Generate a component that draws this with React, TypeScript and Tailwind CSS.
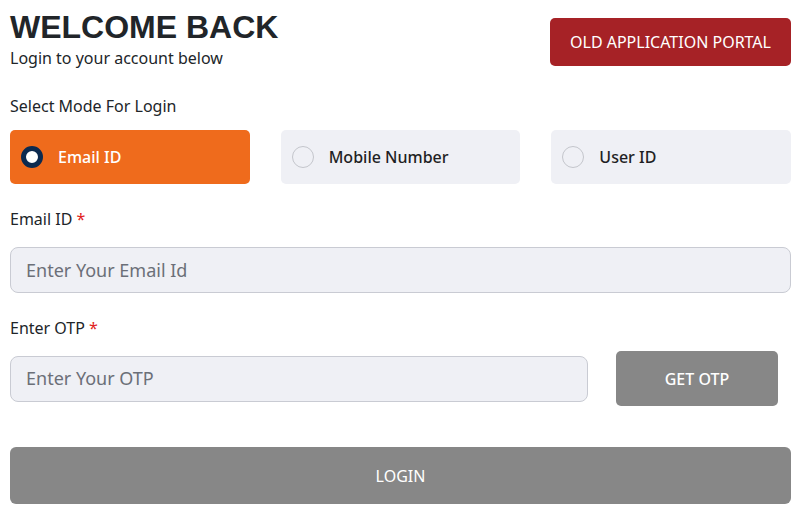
import React from "react";

const body = { fontFamily: '"Noto Sans", "Open Sans", sans-serif' };

function Radio({ selected }: { selected?: boolean }) {
  return selected ? (
    <span className="w-[22px] h-[22px] rounded-full border-[5px] border-[#0c2a4f] bg-white box-border shrink-0" />
  ) : (
    <span className="w-[22px] h-[22px] rounded-full border border-[#c4c6cc] bg-[#eff0f5] box-border shrink-0" />
  );
}

function ModeCard({ label, selected }: { label: string; selected?: boolean }) {
  return (
    <div
      className={
        "w-[240px] h-[54px] rounded-[5px] flex items-center pl-[11px] gap-[15px] " +
        (selected ? "bg-[#ef6b1c] text-white" : "bg-[#eff0f5] text-[#1f1f24]")
      }
    >
      <Radio selected={selected} />
      <span className="text-[16px] font-medium">{label}</span>
    </div>
  );
}

export default function App() {
  return (
    <div className="w-[800px] h-[510px] bg-white pl-[10px] pr-[9px] overflow-hidden text-[#212529]" style={body}>
      <div className="flex justify-between items-start pt-[9px]">
        <div>
          <h1
            className="text-[32px] font-bold leading-[36px] text-[#212529]"
            style={{ fontFamily: '"Liberation Sans", Arial, sans-serif' }}
          >
            WELCOME BACK
          </h1>
          <p className="text-[16px] leading-[24px] mt-[1px]">Login to your account below</p>
        </div>
        <button className="mt-[9px] w-[241px] h-[48px] rounded-[5px] bg-[#a62226] text-white text-[16px]">
          OLD APPLICATION PORTAL
        </button>
      </div>

      <p className="text-[16px] leading-[24px] mt-[24px]">Select Mode For Login</p>

      <div className="flex gap-[31px] mt-[12px]">
        <ModeCard label="Email ID" selected />
        <ModeCard label="Mobile Number" />
        <ModeCard label="User ID" />
      </div>

      <p className="text-[16px] leading-[24px] mt-[23px]">
        Email ID <span className="text-[#e11d1d]">*</span>
      </p>
      <div className="mt-[16px] h-[46px] rounded-[8px] border border-[#c9cbd3] bg-[#eff0f5] flex items-center pl-[15px]">
        <span className="text-[18px] text-[#6b6f78]">Enter Your Email Id</span>
      </div>

      <p className="text-[16px] leading-[24px] mt-[23px]">
        Enter OTP <span className="text-[#e11d1d]">*</span>
      </p>
      <div className="flex items-center mt-[11px]">
        <div className="w-[578px] h-[46px] rounded-[8px] border border-[#c9cbd3] bg-[#eff0f5] flex items-center pl-[15px]">
          <span className="text-[18px] text-[#6b6f78]">Enter Your OTP</span>
        </div>
        <button className="ml-[28px] w-[162px] h-[55px] rounded-[5px] bg-[#878787] text-white text-[16px] font-medium">
          GET OTP
        </button>
      </div>

      <button className="mt-[41px] w-full h-[57px] rounded-[6px] bg-[#878787] text-white text-[16px]">
        LOGIN
      </button>
    </div>
  );
}
